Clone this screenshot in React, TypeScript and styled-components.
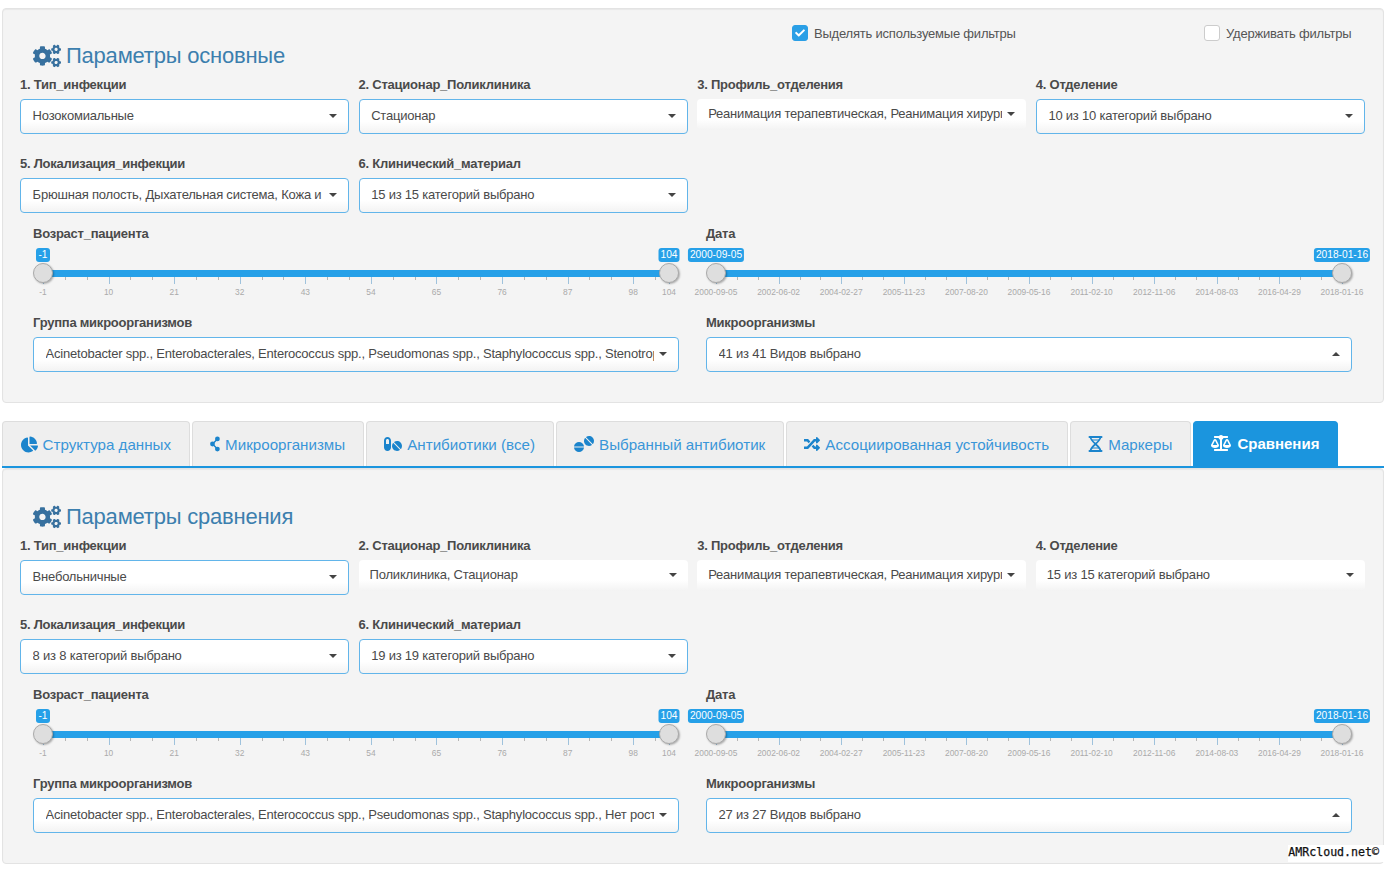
import React from "react";
import styled, { createGlobalStyle } from "styled-components";
import {
  FaCogs,
  FaChartPie,
  FaPills,
  FaTablets,
  FaRandom,
  FaBalanceScale,
  FaCheck,
} from "react-icons/fa";

const GlobalStyle = createGlobalStyle`
  html, body {
    margin: 0;
    padding: 0;
    height: 869px;
    overflow: hidden;
    background: #fff;
    font-family: "Liberation Sans", Arial, sans-serif;
    font-size: 14px;
    color: #333;
  }
  * { box-sizing: border-box; }
`;

const Page = styled.div`
  position: relative;
  width: 1390px;
  height: 869px;
  padding: 8px 6px 0 2px;
`;

const Well = styled.section`
  background: #f4f4f4;
  border: 1px solid #e3e3e3;
  border-radius: 4px;
  box-shadow: inset 0 1px 1px rgba(0, 0, 0, 0.05);
  padding: 0 18px 30px 17px;
`;

const Header = styled.div<{ $height: number }>`
  height: ${(p) => p.$height}px;
  display: flex;
  align-items: flex-end;
  justify-content: space-between;
`;

const Title = styled.h3`
  margin: 0 0 4px 13px;
  display: flex;
  align-items: center;
  gap: 5px;
  font-weight: 400;
  font-size: 22px;
  letter-spacing: -0.22px;
  line-height: 28px;
  color: #3c7fae;
  svg {
    color: #37709e;
  }
`;

const Checks = styled.div`
  align-self: flex-start;
  display: grid;
  grid-template-columns: 412px 148px;
  padding-top: 15px;
  margin-right: 13px;
`;

const Check = styled.label`
  display: flex;
  align-items: center;
  gap: 6px;
  height: 18px;
  color: #555;
  font-size: 13px;
  letter-spacing: -0.21px;
  white-space: nowrap;
`;

const Box = styled.span<{ $on?: boolean }>`
  flex: none;
  width: 16px;
  height: 16px;
  border-radius: 3px;
  display: flex;
  align-items: center;
  justify-content: center;
  color: #fff;
  font-size: 10px;
  background: ${(p) => (p.$on ? "#2a9fe6" : "#fff")};
  border: 1px solid ${(p) => (p.$on ? "#2a9fe6" : "#ccc")};
`;

const FilterGrid = styled.div`
  display: grid;
  grid-template-columns: repeat(4, 329px);
  column-gap: 9.6px;
  row-gap: 19px;
`;

const Field = styled.div`
  min-width: 0;
`;

const FieldLabel = styled.div<{ $flush?: boolean }>`
  padding-top: 2px;
  font-weight: 700;
  font-size: 13px;
  letter-spacing: -0.24px;
  line-height: 18px;
  color: #4a4a4a;
  margin-bottom: ${(p) => (p.$flush ? 0 : 5)}px;
  white-space: nowrap;
`;

const Select = styled.div<{ $plain?: boolean }>`
  display: flex;
  align-items: ${(p) => (p.$plain ? "flex-start" : "center")};
  height: ${(p) => (p.$plain ? "31px" : "35px")};
  padding: ${(p) => (p.$plain ? "5px 11px 0" : "0 11px 2px 11.6px")};
  background: linear-gradient(#fff 65%, #f3f3f3);
  border: ${(p) => (p.$plain ? "0" : "1px solid #62b5ea")};
  border-radius: 4px;
  color: #4a4a4a;
  font-size: 13px;
  letter-spacing: -0.21px;
  line-height: 20px;
`;

const SelectText = styled.span`
  flex: 1;
  min-width: 0;
  overflow: hidden;
  white-space: nowrap;
`;

const Caret = styled.span<{ $up?: boolean; $plain?: boolean }>`
  flex: none;
  margin-left: 5px;
  width: 0;
  height: 0;
  border-left: 4px solid transparent;
  border-right: 4px solid transparent;
  ${(p) => (p.$up ? "border-bottom: 4px solid #444;" : "border-top: 4px solid #444;")}
  ${(p) => (p.$plain ? "margin-top: 8px;" : "")}
`;

const WideGrid = styled.div`
  display: grid;
  grid-template-columns: 646px 646px;
  column-gap: 27px;
  padding: 10px 13px 0;
`;

const Slider = styled.div`
  position: relative;
  height: 69px;
`;

const Track = styled.div`
  position: absolute;
  left: 10px;
  right: 10px;
  top: 27px;
  height: 7px;
  background: #26a0e8;
`;

const Handle = styled.span<{ $right?: boolean }>`
  position: absolute;
  top: 20px;
  ${(p) => (p.$right ? "right: 0;" : "left: 0;")}
  width: 20px;
  height: 20px;
  border-radius: 50%;
  background: #dedede;
  border: 1px solid #aaa;
  box-shadow: 1px 1px 2px rgba(0, 0, 0, 0.3);
`;

const Badge = styled.span`
  position: absolute;
  top: 5px;
  height: 14px;
  transform: translateX(-50%);
  padding: 0 2px;
  min-width: 14px;
  text-align: center;
  background: #26a0e8;
  border-radius: 3px;
  color: #fff;
  font-size: 10.2px;
  line-height: 14px;
  white-space: nowrap;
`;

const Tick = styled.span<{ $major?: boolean }>`
  position: absolute;
  top: 34px;
  width: 1px;
  height: ${(p) => (p.$major ? 7 : 3)}px;
  background: ${(p) => (p.$major ? "#9fc2dc" : "#b5b5b5")};
`;

const TickLabel = styled.span`
  position: absolute;
  top: 43px;
  transform: translateX(-50%);
  color: #aaa;
  font-size: 8.4px;
  line-height: 12px;
  white-space: nowrap;
`;

const TabBar = styled.nav`
  display: flex;
  gap: 2px;
  margin-top: 18px;
  height: 47px;
  border-bottom: 2px solid #1b95de;
`;

const Tab = styled.div<{ $active?: boolean }>`
  display: flex;
  align-items: center;
  gap: ${(p) => (p.$active ? 6 : 5)}px;
  height: 45px;
  padding: 0 17.55px ${(p) => (p.$active ? 2 : 0)}px;
  white-space: nowrap;
  border: 1px solid ${(p) => (p.$active ? "#1b95de" : "#ddd")};
  border-bottom: 0;
  border-radius: 4px 4px 0 0;
  background: ${(p) => (p.$active ? "#1b95de" : "#efefef")};
  color: ${(p) => (p.$active ? "#fff" : "#3a96d8")};
  font-size: ${(p) => (p.$active ? "15px" : "15.15px")};
  font-weight: ${(p) => (p.$active ? 700 : 400)};
  svg {
    flex: none;
    color: ${(p) => (p.$active ? "#fff" : "#1b84cc")};
  }
`;

const Copyright = styled.div`
  position: absolute;
  right: 6px;
  top: 845px;
  height: 17px;
  background: #fff;
  padding: 0 5px 0 0;
  font-family: "DejaVu Sans Mono", "Liberation Mono", monospace;
  font-size: 11.6px;
  line-height: 15px;
  color: #111;
  -webkit-text-stroke: 0.25px #111;
`;

// три узла, как на вкладке "Микроорганизмы"
const NodesIcon = () => (
  <svg width="10" height="16" viewBox="0 0 10 16" fill="currentColor" stroke="currentColor">
    <path d="M7.5 3 2.5 8l5 5" fill="none" strokeWidth="1.4" />
    <circle cx="7.4" cy="2.9" r="2.4" stroke="none" />
    <circle cx="2.5" cy="8" r="2.4" stroke="none" />
    <circle cx="7.4" cy="13.1" r="2.4" stroke="none" />
  </svg>
);

// песочные часы из спирали ДНК, вкладка "Маркеры"
const MarkersIcon = () => (
  <svg width="15" height="16" viewBox="0 0 15 16" fill="none" stroke="currentColor">
    <path d="M1.5 1h12M1.5 15h12" strokeWidth="2" strokeLinecap="round" />
    <path d="M2.5 1c0 5 10 9 10 14M12.5 1c0 5-10 9-10 14" strokeWidth="1.7" />
    <path d="M4 4h7M4 12h7" strokeWidth="1.2" />
  </svg>
);

const AGE_MAJOR = [-1, 10, 21, 32, 43, 54, 65, 76, 87, 98, 104];
const DATES = [
  "2000-09-05",
  "2002-06-02",
  "2004-02-27",
  "2005-11-23",
  "2007-08-20",
  "2009-05-16",
  "2011-02-10",
  "2012-11-06",
  "2014-08-03",
  "2016-04-29",
  "2018-01-16",
];

const TRACK = 626;

type Mark = { x: number; label?: string };

function ageMarks(): Mark[] {
  const out: Mark[] = [];
  AGE_MAJOR.forEach((v, i) => {
    const x = ((v + 1) / 105) * TRACK;
    out.push({ x, label: String(v) });
    const next = AGE_MAJOR[i + 1];
    if (next === undefined) return;
    const nx = ((next + 1) / 105) * TRACK;
    const step = 21.83;
    for (let t = x + step; t < nx - 2; t += step) out.push({ x: t });
  });
  return out;
}

function dateMarks(): Mark[] {
  const out: Mark[] = [];
  DATES.forEach((d, i) => {
    const x = (i / 10) * TRACK;
    out.push({ x, label: d });
    if (i < 10) {
      out.push({ x: x + 20.9 });
      out.push({ x: x + 41.7 });
    }
  });
  return out;
}

function RangeSlider(props: { marks: Mark[]; from: string; to: string }) {
  return (
    <Slider>
      <Track />
      {props.marks.map((m, i) => (
        <React.Fragment key={i}>
          <Tick $major={!!m.label} style={{ left: 10 + m.x }} />
          {m.label && <TickLabel style={{ left: 10 + m.x }}>{m.label}</TickLabel>}
        </React.Fragment>
      ))}
      <Handle />
      <Handle $right />
      <Badge style={{ left: 10 }}>{props.from}</Badge>
      <Badge style={{ left: 10 + TRACK }}>{props.to}</Badge>
    </Slider>
  );
}

type Filter = { label: string; value: string; plain?: boolean; up?: boolean };

function FilterField({ f }: { f: Filter }) {
  return (
    <Field>
      <FieldLabel>{f.label}</FieldLabel>
      <Select $plain={f.plain}>
        <SelectText>{f.value}</SelectText>
        <Caret $up={f.up} $plain={f.plain} />
      </Select>
    </Field>
  );
}

function Params(props: {
  title: string;
  headHeight: number;
  checks?: boolean;
  filters: Filter[];
  group: Filter;
  micro: Filter;
}) {
  return (
    <>
      <Header $height={props.headHeight}>
        <Title>
          <FaCogs size={28} />
          {props.title}
        </Title>
        {props.checks && (
          <Checks>
            <Check>
              <Box $on>
                <FaCheck />
              </Box>
              Выделять используемые фильтры
            </Check>
            <Check>
              <Box />
              Удерживать фильтры
            </Check>
          </Checks>
        )}
      </Header>
      <FilterGrid>
        {props.filters.map((f) => (
          <FilterField key={f.label} f={f} />
        ))}
      </FilterGrid>
      <WideGrid>
        <Field>
          <FieldLabel $flush>Возраст_пациента</FieldLabel>
          <RangeSlider marks={ageMarks()} from="-1" to="104" />
          <FilterField f={props.group} />
        </Field>
        <Field>
          <FieldLabel $flush>Дата</FieldLabel>
          <RangeSlider marks={dateMarks()} from="2000-09-05" to="2018-01-16" />
          <FilterField f={props.micro} />
        </Field>
      </WideGrid>
    </>
  );
}

const REANIM = "Реанимация терапевтическая, Реанимация хирургическая";
const GROUP_HEAD = "Acinetobacter spp., Enterobacterales, Enterococcus spp., Pseudomonas spp., Staphylococcus spp., ";

const mainFilters: Filter[] = [
  { label: "1. Тип_инфекции", value: "Нозокомиальные" },
  { label: "2. Стационар_Поликлиника", value: "Стационар" },
  { label: "3. Профиль_отделения", value: REANIM, plain: true },
  { label: "4. Отделение", value: "10 из 10 категорий выбрано" },
  { label: "5. Локализация_инфекции", value: "Брюшная полость, Дыхательная система, Кожа и мягкие ткани" },
  { label: "6. Клинический_материал", value: "15 из 15 категорий выбрано" },
];

const compareFilters: Filter[] = [
  { label: "1. Тип_инфекции", value: "Внебольничные" },
  { label: "2. Стационар_Поликлиника", value: "Поликлиника, Стационар", plain: true },
  { label: "3. Профиль_отделения", value: REANIM, plain: true },
  { label: "4. Отделение", value: "15 из 15 категорий выбрано", plain: true },
  { label: "5. Локализация_инфекции", value: "8 из 8 категорий выбрано" },
  { label: "6. Клинический_материал", value: "19 из 19 категорий выбрано" },
];

const tabs = [
  { label: "Структура данных", icon: <FaChartPie size={17} /> },
  { label: "Микроорганизмы", icon: <NodesIcon /> },
  { label: "Антибиотики (все)", icon: <FaPills size={18} /> },
  { label: "Выбранный антибиотик", icon: <FaTablets size={20} /> },
  { label: "Ассоциированная устойчивость", icon: <FaRandom size={16} /> },
  { label: "Маркеры", icon: <MarkersIcon /> },
];

export default function App() {
  return (
    <Page>
      <GlobalStyle />
      <Well>
        <Params
          title="Параметры основные"
          headHeight={65}
          checks
          filters={mainFilters}
          group={{ label: "Группа микроорганизмов", value: GROUP_HEAD + "Stenotrophomonas spp." }}
          micro={{ label: "Микроорганизмы", value: "41 из 41 Видов выбрано", up: true }}
        />
      </Well>
      <TabBar>
        {tabs.map((t) => (
          <Tab key={t.label}>
            {t.icon}
            {t.label}
          </Tab>
        ))}
        <Tab $active>
          <FaBalanceScale size={20} />
          Сравнения
        </Tab>
      </TabBar>
      <Well>
        <Params
          title="Параметры сравнения"
          headHeight={66}
          filters={compareFilters}
          group={{ label: "Группа микроорганизмов", value: GROUP_HEAD + "Нет роста, Другие" }}
          micro={{ label: "Микроорганизмы", value: "27 из 27 Видов выбрано", up: true }}
        />
      </Well>
      <Copyright>AMRcloud.net©</Copyright>
    </Page>
  );
}
